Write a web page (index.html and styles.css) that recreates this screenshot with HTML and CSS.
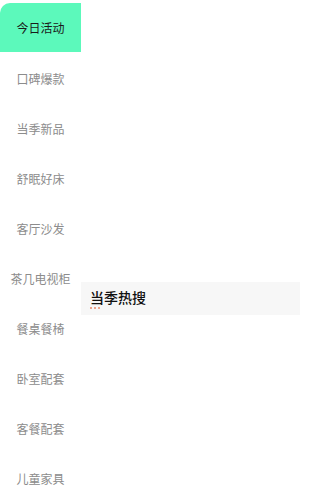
FILE: index.html
```html
<!DOCTYPE html>
<html lang="zh-CN">
<head>
<meta charset="utf-8">
<link rel="stylesheet" href="styles.css">
</head>
<body>
<div class="page">
  <nav class="side">
    <div class="item active">今日活动</div>
    <div class="item">口碑爆款</div>
    <div class="item">当季新品</div>
    <div class="item">舒眠好床</div>
    <div class="item">客厅沙发</div>
    <div class="item">茶几电视柜</div>
    <div class="item">餐桌餐椅</div>
    <div class="item">卧室配套</div>
    <div class="item">客餐配套</div>
    <div class="item">儿童家具</div>
  </nav>
  <main class="content">
    <div class="section-head">
      <div class="section-title">当季热搜</div>
      <div class="dots"><span></span><span></span><span></span></div>
    </div>
  </main>
</div>
</body>
</html>
```
FILE: styles.css
```css
html, body {
  margin: 0;
  padding: 0;
  background: #fff;
}
body {
  font-family: "Noto Sans CJK SC", "Noto Sans", sans-serif;
  width: 300px;
  height: 493px;
  overflow: hidden;
}
.page {
  display: flex;
  flex-direction: row;
}
.side {
  width: 81px;
  flex: none;
  padding-top: 3px;
  display: flex;
  flex-direction: column;
}
.item {
  height: 50px;
  display: flex;
  align-items: center;
  justify-content: center;
  font-size: 12px;
  color: #8c8c8c;
  white-space: nowrap;
}
.item.active {
  background: #5cf9bb;
  color: #1a1a1a;
  border-top-left-radius: 10px;
  height: 49px;
  margin-bottom: 1px;
}
.content {
  flex: 1;
  padding-top: 282px;
}
.section-head {
  background: #f7f7f7;
  height: 33px;
  padding-left: 9px;
  padding-top: 7px;
  box-sizing: border-box;
}
.section-title {
  font-size: 14px;
  line-height: 16px;
  font-weight: 500;
  color: #111;
}
.dots {
  display: flex;
  gap: 2px;
  margin-top: 2px;
}
.dots span {
  width: 2px;
  height: 2px;
  background: #e8896a;
  border-radius: 1px;
}
```
